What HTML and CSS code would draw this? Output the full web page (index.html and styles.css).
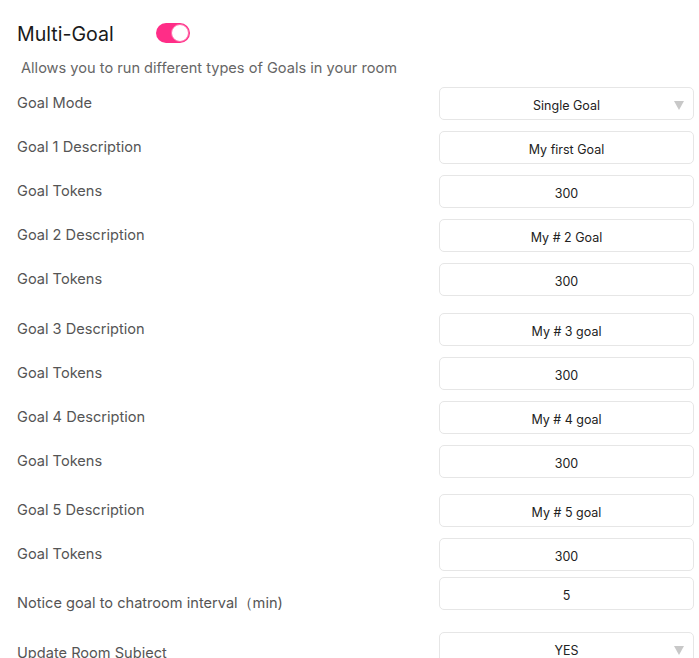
FILE: index.html
```html
<!DOCTYPE html>
<html>
<head>
<meta charset="utf-8">
<link rel="stylesheet" href="styles.css">
</head>
<body>
<div class="panel">
  <div class="header">
    <div class="title">Multi-Goal</div>
    <div class="toggle"><span class="knob"></span></div>
  </div>
  <div class="desc">Allows you to run different types of Goals in your room</div>

  <div class="row first">
    <div class="label">Goal Mode</div>
    <div class="field select">Single Goal<span class="arrow"></span></div>
  </div>
  <div class="row">
    <div class="label">Goal 1 Description</div>
    <div class="field">My first Goal</div>
  </div>
  <div class="row">
    <div class="label">Goal Tokens</div>
    <div class="field">300</div>
  </div>
  <div class="row">
    <div class="label">Goal 2 Description</div>
    <div class="field">My # 2 Goal</div>
  </div>
  <div class="row">
    <div class="label">Goal Tokens</div>
    <div class="field">300</div>
  </div>
  <div class="row wide">
    <div class="label">Goal 3 Description</div>
    <div class="field">My # 3 goal</div>
  </div>
  <div class="row">
    <div class="label">Goal Tokens</div>
    <div class="field">300</div>
  </div>
  <div class="row">
    <div class="label">Goal 4 Description</div>
    <div class="field">My # 4 goal</div>
  </div>
  <div class="row">
    <div class="label">Goal Tokens</div>
    <div class="field">300</div>
  </div>
  <div class="row wide5">
    <div class="label">Goal 5 Description</div>
    <div class="field">My # 5 goal</div>
  </div>
  <div class="row">
    <div class="label">Goal Tokens</div>
    <div class="field">300</div>
  </div>
  <div class="row notice">
    <div class="label">Notice goal to chatroom interval（min)</div>
    <div class="field">5</div>
  </div>
  <div class="row subject">
    <div class="label">Update Room Subject</div>
    <div class="field select">YES<span class="arrow"></span></div>
  </div>
</div>
</body>
</html>
```
FILE: styles.css
```css
html, body {
  margin: 0;
  padding: 0;
  background: #ffffff;
}
body {
  font-family: Inter, "Noto Sans", "Liberation Sans", sans-serif;
  overflow: hidden;
}
.panel {
  padding: 22px 5px 0 17px;
}
.header {
  display: flex;
  align-items: center;
  height: 22px;
}
.title {
  width: 139px;
  font-size: 19.6px;
  line-height: 22px;
  color: #1a1a1a;
  margin-top: 1px;
}
.toggle {
  width: 34px;
  height: 20px;
  border-radius: 10px;
  background: #ff2d87;
  display: flex;
  align-items: center;
  justify-content: flex-end;
  box-sizing: border-box;
  padding-right: 1px;
}
.knob {
  width: 18px;
  height: 18px;
  border-radius: 50%;
  background: #fff;
  box-sizing: border-box;
  border: 1px solid #ff6aa8;
}
.desc {
  margin-top: 15px;
  padding-left: 4px;
  font-size: 14.6px;
  line-height: 18px;
  color: #666;
}
.row {
  display: flex;
  align-items: center;
  justify-content: space-between;
  margin-top: 11px;
}
.row.first { margin-top: 10px; }
.row.wide { margin-top: 17px; }
.row.wide5 { margin-top: 16px; }
.row.notice {
  margin-top: 6px;
  align-items: flex-start;
}
.row.notice .label { margin-top: 17px; }
.row.subject {
  margin-top: 20px;
  align-items: flex-start;
}
.row.subject .label { margin-top: 12px; }
.label {
  font-size: 14.6px;
  line-height: 18px;
  color: #555;
  margin-top: -2px;
}
.field {
  position: relative;
  width: 255px;
  height: 33px;
  box-sizing: border-box;
  border: 1px solid #e6e6e6;
  border-radius: 5px;
  display: flex;
  align-items: center;
  justify-content: center;
  padding-top: 3px;
  font-size: 12.5px;
  color: #222;
}
.arrow {
  position: absolute;
  right: 9px;
  top: 13px;
  width: 0;
  height: 0;
  border-left: 5px solid transparent;
  border-right: 5px solid transparent;
  border-top: 9px solid #c8c8c8;
}
```
